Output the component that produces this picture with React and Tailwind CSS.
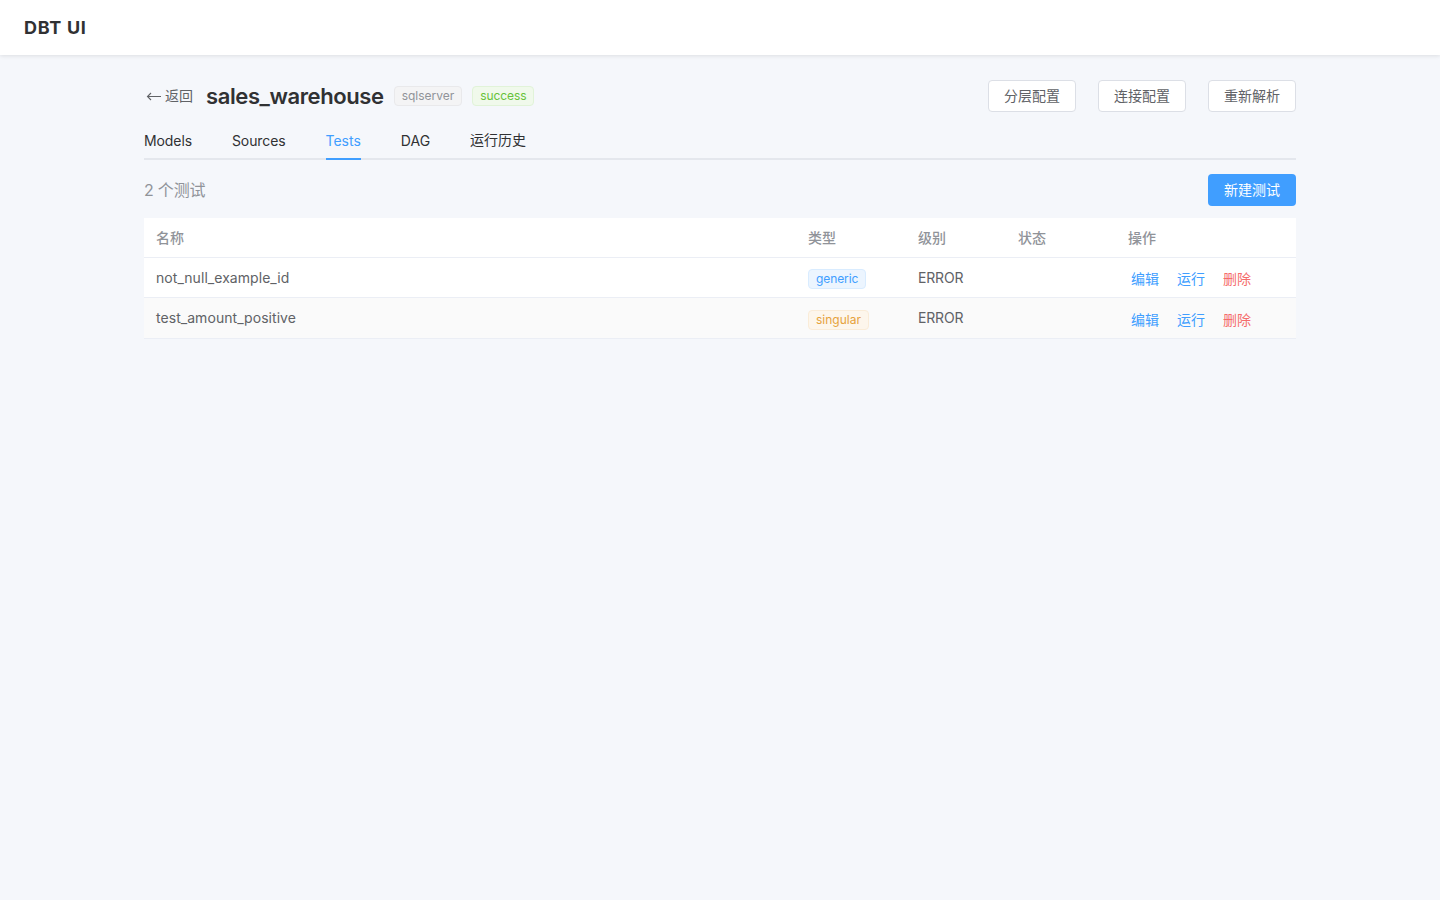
import React from 'react';

const font = "font-['Inter','Noto_Sans_CJK_SC',sans-serif]";

const tabs = ['Models', 'Sources', 'Tests', 'DAG', '运行历史'];

const rows = [
  { name: 'not_null_example_id', type: 'generic', level: 'ERROR' },
  { name: 'test_amount_positive', type: 'singular', level: 'ERROR' },
];

const OutlineButton = ({ children }) => (
  <button className="h-8 w-[88px] rounded border border-[#dcdfe6] bg-white text-sm text-[#606266]">
    {children}
  </button>
);

const TypeTag = ({ type }) => (
  <span
    className={
      type === 'generic'
        ? 'inline-flex h-5 items-center rounded border border-[#d9ecff] bg-[#ecf5ff] px-[7px] text-xs tracking-[-0.1px] text-[#409eff]'
        : 'inline-flex h-5 items-center rounded border border-[#faecd8] bg-[#fdf6ec] px-[7px] text-xs text-[#e6a23c]'
    }
  >
    {type}
  </span>
);

const App = () => {
  return (
    <div className={`${font} min-h-[900px] bg-[#f5f7fb]`}>
      <header className="flex h-[55px] items-center bg-white px-6 shadow-[0_1px_4px_rgba(0,0,0,0.1)]">
        <span className="text-lg font-bold tracking-[0.7px] text-[#303133]">DBT UI</span>
      </header>

      <main className="mx-auto w-[1152px] pt-[25px]">
        <div className="flex h-8 items-center justify-between">
          <div className="flex items-center">
            <button className="flex w-[62px] items-center pl-[2px] text-sm text-[#606266]">
              <svg width="15" height="14" viewBox="0 0 15 14" fill="none" stroke="#606266" strokeWidth="1.1" className="mr-1">
                <path d="M15 7.5H1.5M5 4 1.5 7.5 5 11" />
              </svg>
              返回
            </button>
            <h1 className="text-[22px] leading-8 font-semibold tracking-[-0.4px] text-[#303133]">sales_warehouse</h1>
            <span className="ml-[10px] inline-flex h-5 items-center rounded border border-[#e9e9eb] bg-[#f4f4f5] px-[7px] text-xs text-[#909399]">
              sqlserver
            </span>
            <span className="ml-[10px] inline-flex h-5 items-center rounded border border-[#e1f3d8] bg-[#f0f9eb] px-[7px] text-xs tracking-[-0.1px] text-[#67c23a]">
              success
            </span>
          </div>
          <div className="flex gap-[22px]">
            <OutlineButton>分层配置</OutlineButton>
            <OutlineButton>连接配置</OutlineButton>
            <OutlineButton>重新解析</OutlineButton>
          </div>
        </div>

        <nav className="mt-2 flex h-[40px] gap-10 border-b-2 border-[#e4e7ed]">
          {tabs.map((tab) => (
            <div
              key={tab}
              className={
                tab === 'Tests'
                  ? '-mb-[2px] flex h-[40px] items-center border-b-2 border-[#409eff] pt-1 text-sm text-[#409eff]'
                  : tab === '运行历史'
                    ? 'flex h-[38px] items-center pt-[2px] text-sm text-[#303133]'
                    : tab === 'DAG'
                      ? 'flex h-[38px] items-center pt-1 text-sm text-[#303133]'
                      : 'flex h-[38px] items-center pt-1 text-sm tracking-[-0.1px] text-[#303133]'
              }
            >
              {tab}
            </div>
          ))}
        </nav>

        <div className="mt-[14px] flex h-8 items-center justify-between">
          <span className="text-base tracking-[-0.2px] text-[#909399]">2 个测试</span>
          <button className="h-8 w-[88px] rounded bg-[#409eff] text-sm text-white">新建测试</button>
        </div>

        <div className="mt-3 bg-white text-sm">
          <div className="grid h-10 grid-cols-[652px_110px_100px_110px_180px] items-center border-b border-[#ebeef5] font-medium text-[#909399]">
            <div className="px-3">名称</div>
            <div className="px-3">类型</div>
            <div className="px-3">级别</div>
            <div className="px-3">状态</div>
            <div className="px-3">操作</div>
          </div>
          {rows.map((row, i) => (
            <div
              key={row.name}
              className={
                i % 2 === 1
                  ? 'grid h-[41px] grid-cols-[652px_110px_100px_110px_180px] items-center border-b border-[#ebeef5] bg-[#fafafa] text-[#606266]'
                  : 'grid h-10 grid-cols-[652px_110px_100px_110px_180px] items-center border-b border-[#ebeef5] text-[#606266]'
              }
            >
              <div className="px-3 tracking-[0.05px]">{row.name}</div>
              <div className={i % 2 === 1 ? 'px-3 pt-[3px]' : 'px-3 pt-[2px]'}>
                <TypeTag type={row.type} />
              </div>
              <div className="px-3 tracking-[-0.15px]">{row.level}</div>
              <div />
              <div className={i % 2 === 1 ? 'flex gap-[18px] px-[15px] pt-[3px]' : 'flex gap-[18px] px-[15px] pt-[2px]'}>
                <span className="text-[#409eff]">编辑</span>
                <span className="text-[#409eff]">运行</span>
                <span className="text-[#f56c6c]">删除</span>
              </div>
            </div>
          ))}
        </div>
      </main>
    </div>
  );
};

export default App;
